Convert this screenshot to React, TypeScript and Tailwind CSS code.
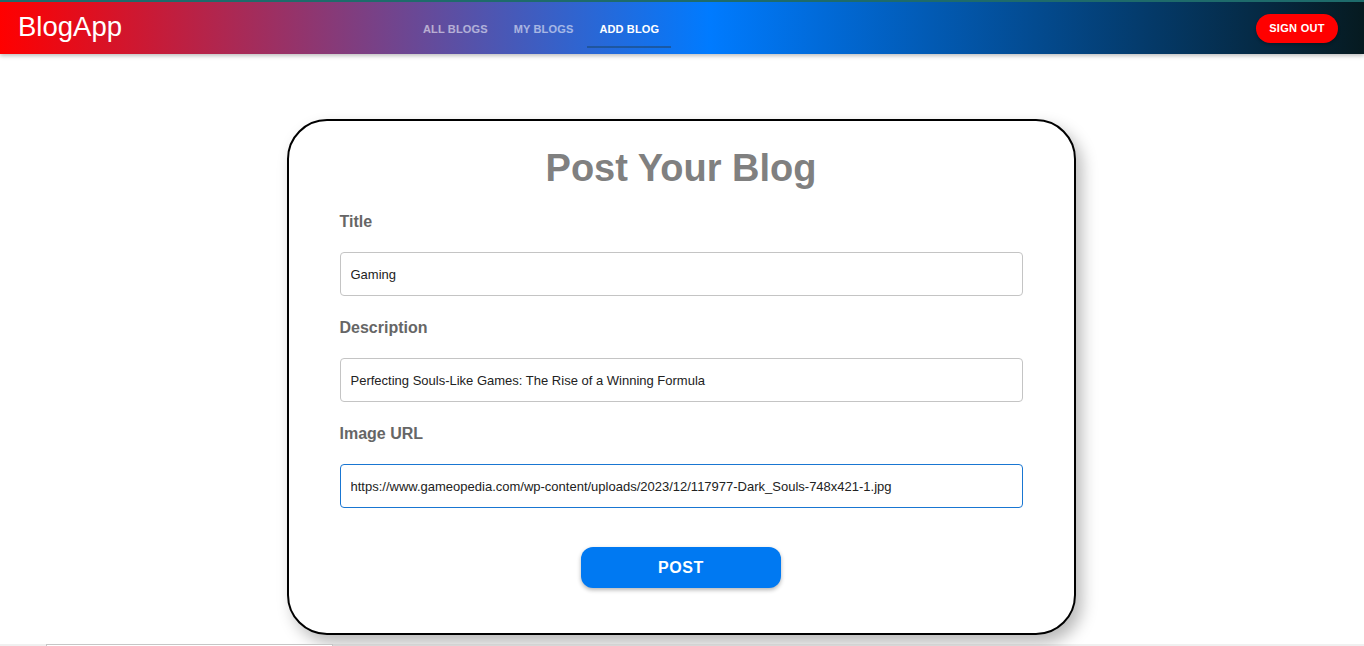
import React, { useState } from 'react';

const tabs = ['ALL BLOGS', 'MY BLOGS', 'ADD BLOG'];

const Header: React.FC = () => {
    const active = 'ADD BLOG';
    return (
        <div className="relative z-10 shadow-[0_2px_4px_rgba(0,0,0,0.25)]">
            <div className="h-[2px] bg-[#1e6b6b]" />
            <header className="h-[52px] flex items-center bg-[linear-gradient(to_right,#ff0000_0%,#007bff_52%,#061a20_100%)]">
                <div className="w-[411px] pl-[18px]">
                    <span className="text-[27.5px] leading-none text-white">BlogApp</span>
                </div>
                <nav className="flex gap-[2px] h-full">
                    {tabs.map(t => (
                        <div key={t} className="relative h-full px-3 flex items-center">
                            <span className={`text-[11px] font-bold tracking-[0.15px] pt-[2px] ${t === active ? 'text-white' : 'text-white/55'}`}>{t}</span>
                            {t === active && <span className="absolute left-0 right-0 bottom-[6px] h-[2px] bg-[#1d4f86]/70" />}
                        </div>
                    ))}
                </nav>
                <div className="flex-1" />
                <button className="mr-[26px] mt-[1px] h-[29px] w-[82px] rounded-full bg-[#ff0000] text-white text-[11px] font-bold tracking-[0.3px] shadow-[0_2px_3px_rgba(0,0,0,0.25)]">
                    SIGN OUT
                </button>
            </header>
        </div>
    );
};

const Field: React.FC<{ label: string; value: string; focused?: boolean; onChange: (v: string) => void; last?: boolean }> = ({ label, value, focused, onChange, last }) => (
    <div className={last ? '' : 'mb-[23px]'}>
        <div className="h-[18px] leading-[18px] text-[16px] font-bold text-[#666666] mb-[21px]">{label}</div>
        <div className={`h-[44px] rounded-[4px] border flex items-center pl-[10px] pr-[10px] pt-[1px] ${focused ? 'border-[#1976d2]' : 'border-[#c4c4c4]'}`}>
            <input
                value={value}
                autoFocus={focused}
                onChange={e => onChange(e.target.value)}
                className="w-full outline-none bg-transparent text-[13px] text-[#222] caret-black"
            />
        </div>
    </div>
);

export default function App() {
    const [title, setTitle] = useState('Gaming');
    const [desc, setDesc] = useState('Perfecting Souls-Like Games: The Rise of a Winning Formula');
    const [url, setUrl] = useState('https://www.gameopedia.com/wp-content/uploads/2023/12/117977-Dark_Souls-748x421-1.jpg');

    return (
        <div className="bg-white min-h-[646px] font-['Liberation_Sans',Arial,sans-serif]">
            <Header />
            <main className="pt-[65px] pb-[9px] flex justify-center">
                <div className="w-[789px] h-[516px] mr-[2px] border-2 border-black rounded-[40px] bg-white shadow-[6px_8px_16px_rgba(0,0,0,0.28)] px-[51px] pt-[25px]">
                    <h1 className="text-center text-[38px] leading-[44px] font-bold text-[#808080] mb-[23px]">Post Your Blog</h1>
                    <Field label="Title" value={title} onChange={setTitle} />
                    <Field label="Description" value={desc} onChange={setDesc} />
                    <Field label="Image URL" value={url} onChange={setUrl} focused last />
                    <div className="flex justify-center mt-[39px]">
                        <button className="w-[200px] h-[41px] rounded-[12px] bg-[#0079f2] text-white text-[16px] font-bold tracking-[0.6px] shadow-[0_2px_4px_rgba(0,0,0,0.3)]">
                            POST
                        </button>
                    </div>
                </div>
            </main>
            <div className="h-[3px] bg-[#f0f0f0] flex">
                <div className="ml-[46px] w-[287px] h-[3px] border-t border-x border-[#c6c6c6] bg-white" />
            </div>
        </div>
    );
}
